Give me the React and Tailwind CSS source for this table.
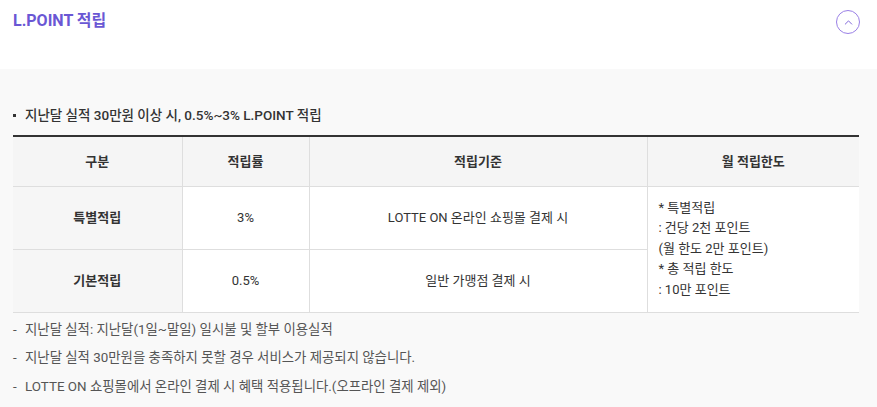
import { ChevronUp } from "lucide-react";

const font = { fontFamily: "Roboto, 'Noto Sans CJK KR', sans-serif" };

export default function App() {
    return (
        <div className="w-[877px] h-[407px] bg-[#f9f9f9] text-[#333]" style={font}>
            {/* header */}
            <div className="h-[69px] bg-white flex items-start justify-between pl-[13px] pr-[17px] pt-[9px]">
                <h2 className="text-[16px] font-bold text-[#6a57d4] leading-[24px]">L.POINT 적립</h2>
                <button className="mt-[1px] w-[24px] h-[24px] rounded-full border border-[#9a80e6] flex items-center justify-center text-[#7a5fd8]">
                    <ChevronUp className="w-[13px] h-[13px]" strokeWidth={1.75} />
                </button>
            </div>

            <div className="px-[13px] pt-[36px]">
                <p className="flex items-center text-[13.5px] font-medium text-[#333] leading-[20px]">
                    <span className="w-[3px] h-[3px] bg-[#333] mr-[9px]" />
                    지난달 실적 30만원 이상 시, 0.5%~3% L.POINT 적립
                </p>

                <table className="mt-[10px] w-[846px] border-t-2 border-[#333] border-collapse text-[13px] text-center">
                    <thead>
                        <tr className="bg-[#f5f5f5] h-[50px] border-b border-[#dedede]">
                            <th className="w-[169px] font-bold">구분</th>
                            <th className="w-[127px] font-bold border-l border-[#dedede]">적립률</th>
                            <th className="w-[338px] font-bold border-l border-[#dedede]">적립기준</th>
                            <th className="font-bold border-l border-[#dedede]">월 적립한도</th>
                        </tr>
                    </thead>
                    <tbody>
                        <tr className="h-[63px] border-b border-[#dedede]">
                            <td className="bg-[#f6f6f6] font-bold">특별적립</td>
                            <td className="bg-white border-l border-[#dedede]">3%</td>
                            <td className="bg-white border-l border-[#dedede]">LOTTE ON 온라인 쇼핑몰 결제 시</td>
                            <td rowSpan={2} className="bg-white border-l border-[#dedede] text-left pl-[11px] leading-[20.5px] align-middle">
                                * 특별적립<br />
                                : 건당 2천 포인트<br />
                                (월 한도 2만 포인트)<br />
                                * 총 적립 한도<br />
                                : 10만 포인트
                            </td>
                        </tr>
                        <tr className="h-[63px] border-b border-[#dedede]">
                            <td className="bg-[#f6f6f6] font-bold">기본적립</td>
                            <td className="bg-white border-l border-[#dedede]">0.5%</td>
                            <td className="bg-white border-l border-[#dedede]">일반 가맹점 결제 시</td>
                        </tr>
                    </tbody>
                </table>

                <ul className="mt-[3px] text-[13.4px] text-[#555] leading-[28.5px]">
                    <li className="flex"><span className="w-[12px] shrink-0">-</span>지난달 실적: 지난달(1일~말일) 일시불 및 할부 이용실적</li>
                    <li className="flex"><span className="w-[12px] shrink-0">-</span>지난달 실적 30만원을 충족하지 못할 경우 서비스가 제공되지 않습니다.</li>
                    <li className="flex"><span className="w-[12px] shrink-0">-</span>LOTTE ON 쇼핑몰에서 온라인 결제 시 혜택 적용됩니다.(오프라인 결제 제외)</li>
                </ul>
            </div>
        </div>
    );
}
